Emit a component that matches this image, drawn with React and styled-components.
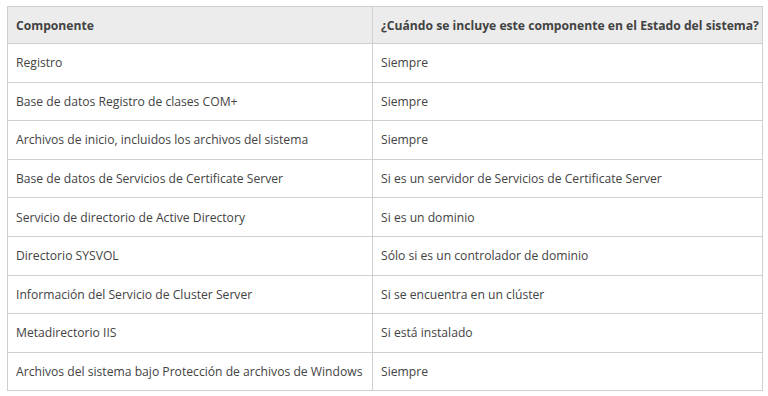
import React from 'react';
import styled, { createGlobalStyle } from 'styled-components';

const GlobalStyle = createGlobalStyle`
  html, body {
    margin: 0;
    padding: 0;
    background: #fff;
  }
`;

const Page = styled.div`
  padding: 6px 5px 6px 7px;
  font-family: 'Open Sans', 'Noto Sans', 'Liberation Sans', sans-serif;
`;

const Table = styled.table`
  width: 756px;
  border-collapse: collapse;
  table-layout: fixed;
  font-size: 12.15px;
  color: #434343;

  th,
  td {
    border: 1px solid #cfcfcf;
    text-align: left;
    padding: 0 8px;
    white-space: nowrap;
  }

  th {
    background: #ececec;
    height: 36px;
    font-weight: 700;
    color: #424242;
  }

  td {
    height: 37.6px;
  }
`;

const rows = [
  ['Registro', 'Siempre'],
  ['Base de datos Registro de clases COM+', 'Siempre'],
  ['Archivos de inicio, incluidos los archivos del sistema', 'Siempre'],
  ['Base de datos de Servicios de Certificate Server', 'Si es un servidor de Servicios de Certificate Server'],
  ['Servicio de directorio de Active Directory', 'Si es un dominio'],
  ['Directorio SYSVOL', 'Sólo si es un controlador de dominio'],
  ['Información del Servicio de Cluster Server', 'Si se encuentra en un clúster'],
  ['Metadirectorio IIS', 'Si está instalado'],
  ['Archivos del sistema bajo Protección de archivos de Windows', 'Siempre'],
];

export default function App() {
  return (
    <Page>
      <GlobalStyle />
      <Table>
        <colgroup>
          <col style={{ width: 365 }} />
          <col />
        </colgroup>
        <thead>
          <tr>
            <th>Componente</th>
            <th>¿Cuándo se incluye este componente en el Estado del sistema?</th>
          </tr>
        </thead>
        <tbody>
          {rows.map(([a, b]) => (
            <tr key={a}>
              <td>{a}</td>
              <td>{b}</td>
            </tr>
          ))}
        </tbody>
      </Table>
    </Page>
  );
}
